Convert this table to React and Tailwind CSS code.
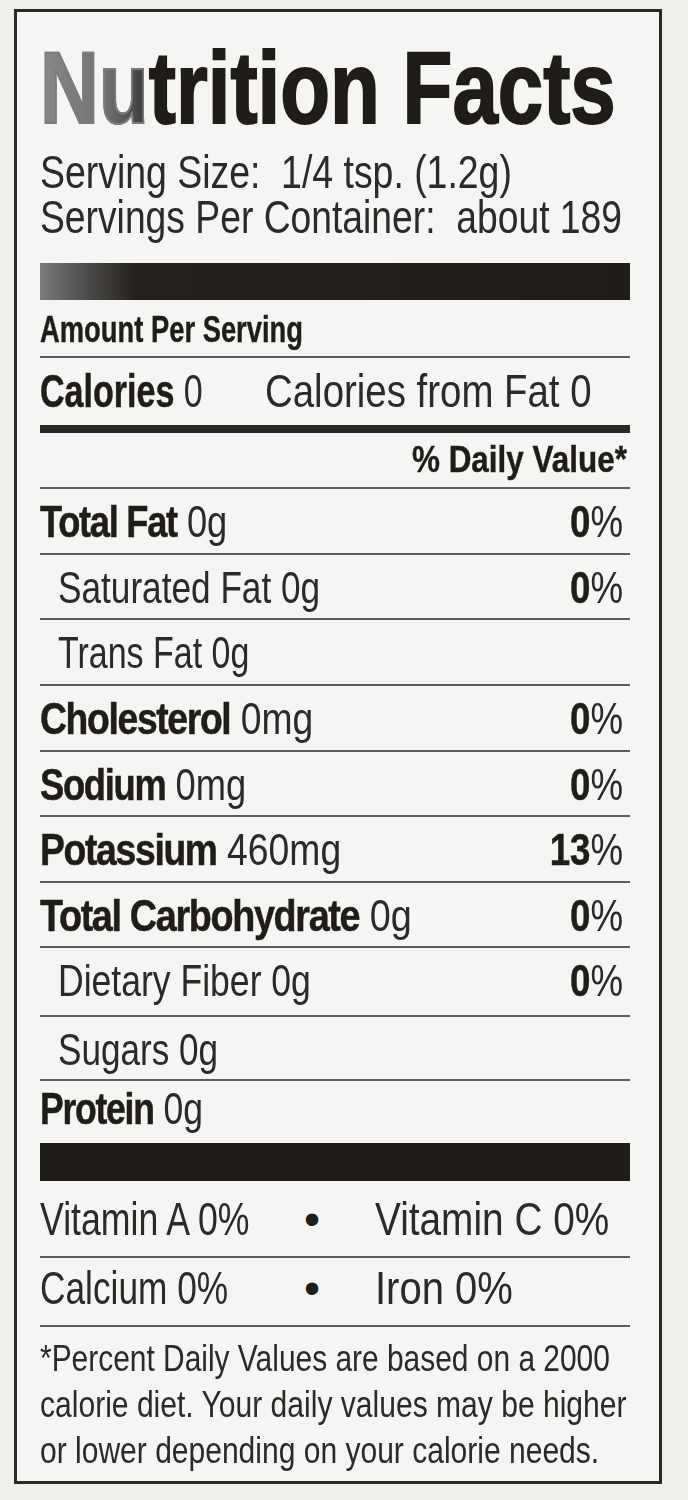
import React from "react";

function T({ s, o = "origin-left", className = "", children }) {
  return (
    <span className={`inline-block whitespace-nowrap ${o} ${s} ${className}`}>
      {children}
    </span>
  );
}

const B = ({ children }) => (
  <span className="font-bold tracking-[-1.6px] text-[#1f1c1a] [-webkit-text-stroke:0.5px_#1f1c1a]">
    {children}
  </span>
);

const rows = [
  { b: "Total Fat", r: " 0g", dv: "0", h: "h-[66px]", s: "scale-x-[0.806]" },
  { r: "Saturated Fat 0g", dv: "0", h: "h-[65px]", indent: true, s: "scale-x-[0.782]" },
  { r: "Trans Fat 0g", h: "h-[66px]", indent: true, s: "scale-x-[0.755]" },
  { b: "Cholesterol", r: " 0mg", dv: "0", h: "h-[66px]", s: "scale-x-[0.828]" },
  { b: "Sodium", r: " 0mg", dv: "0", h: "h-[65px]", s: "scale-x-[0.807]" },
  { b: "Potassium", r: " 460mg", dv: "13", h: "h-[66px]", s: "scale-x-[0.829]" },
  { b: "Total Carbohydrate", r: " 0g", dv: "0", h: "h-[65px]", s: "scale-x-[0.839]" },
  { r: "Dietary Fiber 0g", dv: "0", h: "h-[69px]", indent: true, s: "scale-x-[0.79]" },
  { r: "Sugars 0g", h: "h-[64px]", indent: true, s: "scale-x-[0.78]" },
];

export default function App() {
  return (
    <div className="min-h-[1500px] w-[688px] overflow-hidden bg-[#efefeb] pt-[9px] pl-[14px] font-['Liberation_Sans',Arial,sans-serif] text-[#2c2a28]">
      <div className="w-[648px] border-[3px] border-[#2b2927] bg-[#f5f5f3] pl-[23px] pr-[29px]">
        {/* Title */}
        <div className="h-[126px] pt-[25px]">
          <h1 className="text-[102px] leading-[102px] font-bold text-[#1f1c19]">
            <T s="scale-x-[0.80]" className="[-webkit-text-stroke:2px_#1f1c19]">
              <span className="bg-[linear-gradient(90deg,#8a8987_0%,#72716f_60%,#3a3836_100%)] bg-clip-text text-transparent [-webkit-text-stroke:2px_#7d7c7a]">
                Nu
              </span>
              trition Facts
            </T>
          </h1>
        </div>
        {/* Serving */}
        <div className="h-[125px] pt-[12px] text-[46px] leading-[45px]">
          <div>
            <T s="scale-x-[0.813]">Serving Size:&nbsp; 1/4 tsp. (1.2g)</T>
          </div>
          <div>
            <T s="scale-x-[0.81]">Servings Per Container:&nbsp; about 189</T>
          </div>
        </div>
        {/* Bar */}
        <div className="h-[37px] bg-[linear-gradient(90deg,#7c7b79_0%,#4d4b49_8%,#24211e_16%,#1f1c19_100%)]" />
        {/* Amount */}
        <div className="h-[58px] border-b-2 border-[#5e5c5a] pt-[4px] text-[36px] leading-[52px] font-bold text-[#1f1c1a] [-webkit-text-stroke:0.4px_#1f1c1a]">
          <T s="scale-x-[0.76]">Amount Per Serving</T>
        </div>
        {/* Calories */}
        <div className="flex h-[67px] text-[46px] leading-[67px]">
          <div className="w-[225px] shrink-0">
            <T s="scale-x-[0.74]">
              <span className="font-bold text-[#1f1c1a] [-webkit-text-stroke:0.5px_#1f1c1a]">Calories</span> 0
            </T>
          </div>
          <div className="min-w-0">
            <T s="scale-x-[0.835]">Calories from Fat 0</T>
          </div>
        </div>
        <div className="h-[8px] bg-[#2a2724]" />
        {/* DV */}
        <div className="h-[56px] border-b-2 border-[#5e5c5a] pr-[3px] text-right text-[37px] leading-[54px] font-bold text-[#1f1c1a] [-webkit-text-stroke:0.4px_#1f1c1a]">
          <T s="scale-x-[0.85]" o="origin-right">% Daily Value*</T>
        </div>
        {rows.map((row, i) => (
          <div
            key={i}
            className={`flex ${row.h} items-start justify-between border-b-2 border-[#5e5c5a] pt-[3px] text-[45px] leading-[60px]`}
          >
            <div className={row.indent ? "pl-[18px]" : ""}>
              <T s={row.s}>
                {row.b && <B>{row.b}</B>}
                {row.r}
              </T>
            </div>
            {row.dv && (
              <div className="shrink-0 pr-[7px]">
                <T s="scale-x-[0.815]" o="origin-right">
                  <span className="font-bold text-[#1f1c1a] [-webkit-text-stroke:0.5px_#1f1c1a]">{row.dv}</span>%
                </T>
              </div>
            )}
          </div>
        ))}
        {/* Protein */}
        <div className="h-[62px] text-[45px] leading-[56px]">
          <T s="scale-x-[0.79]">
            <B>Protein</B> 0g
          </T>
        </div>
        <div className="h-[38px] bg-[#1f1c19]" />
        {/* Vitamins */}
        <div className="flex h-[77px] items-start border-b-2 border-[#5e5c5a] pt-[8px] text-[46px] leading-[60px]">
          <div className="w-[242px] shrink-0">
            <T s="scale-x-[0.775]">Vitamin A 0%</T>
          </div>
          <div className="w-[60px] shrink-0 text-center text-[#1f1c1a]">•</div>
          <div className="min-w-0 pl-[33px]">
            <T s="scale-x-[0.843]">Vitamin C 0%</T>
          </div>
        </div>
        <div className="flex h-[67px] items-start text-[46px] leading-[60px]">
          <div className="w-[242px] shrink-0">
            <T s="scale-x-[0.767]">Calcium 0%</T>
          </div>
          <div className="w-[60px] shrink-0 text-center text-[#1f1c1a]">•</div>
          <div className="min-w-0 pl-[33px]">
            <T s="scale-x-[0.87]">Iron 0%</T>
          </div>
        </div>
        {/* Footnote */}
        <div className="h-[156px] border-t-2 border-[#5e5c5a] pt-[9px] text-[36px] leading-[46px]">
          <div>
            <T s="scale-x-[0.831]">*Percent Daily Values are based on a 2000</T>
          </div>
          <div>
            <T s="scale-x-[0.835]">calorie diet. Your daily values may be higher</T>
          </div>
          <div>
            <T s="scale-x-[0.834]">or lower depending on your calorie needs.</T>
          </div>
        </div>
      </div>
    </div>
  );
}
